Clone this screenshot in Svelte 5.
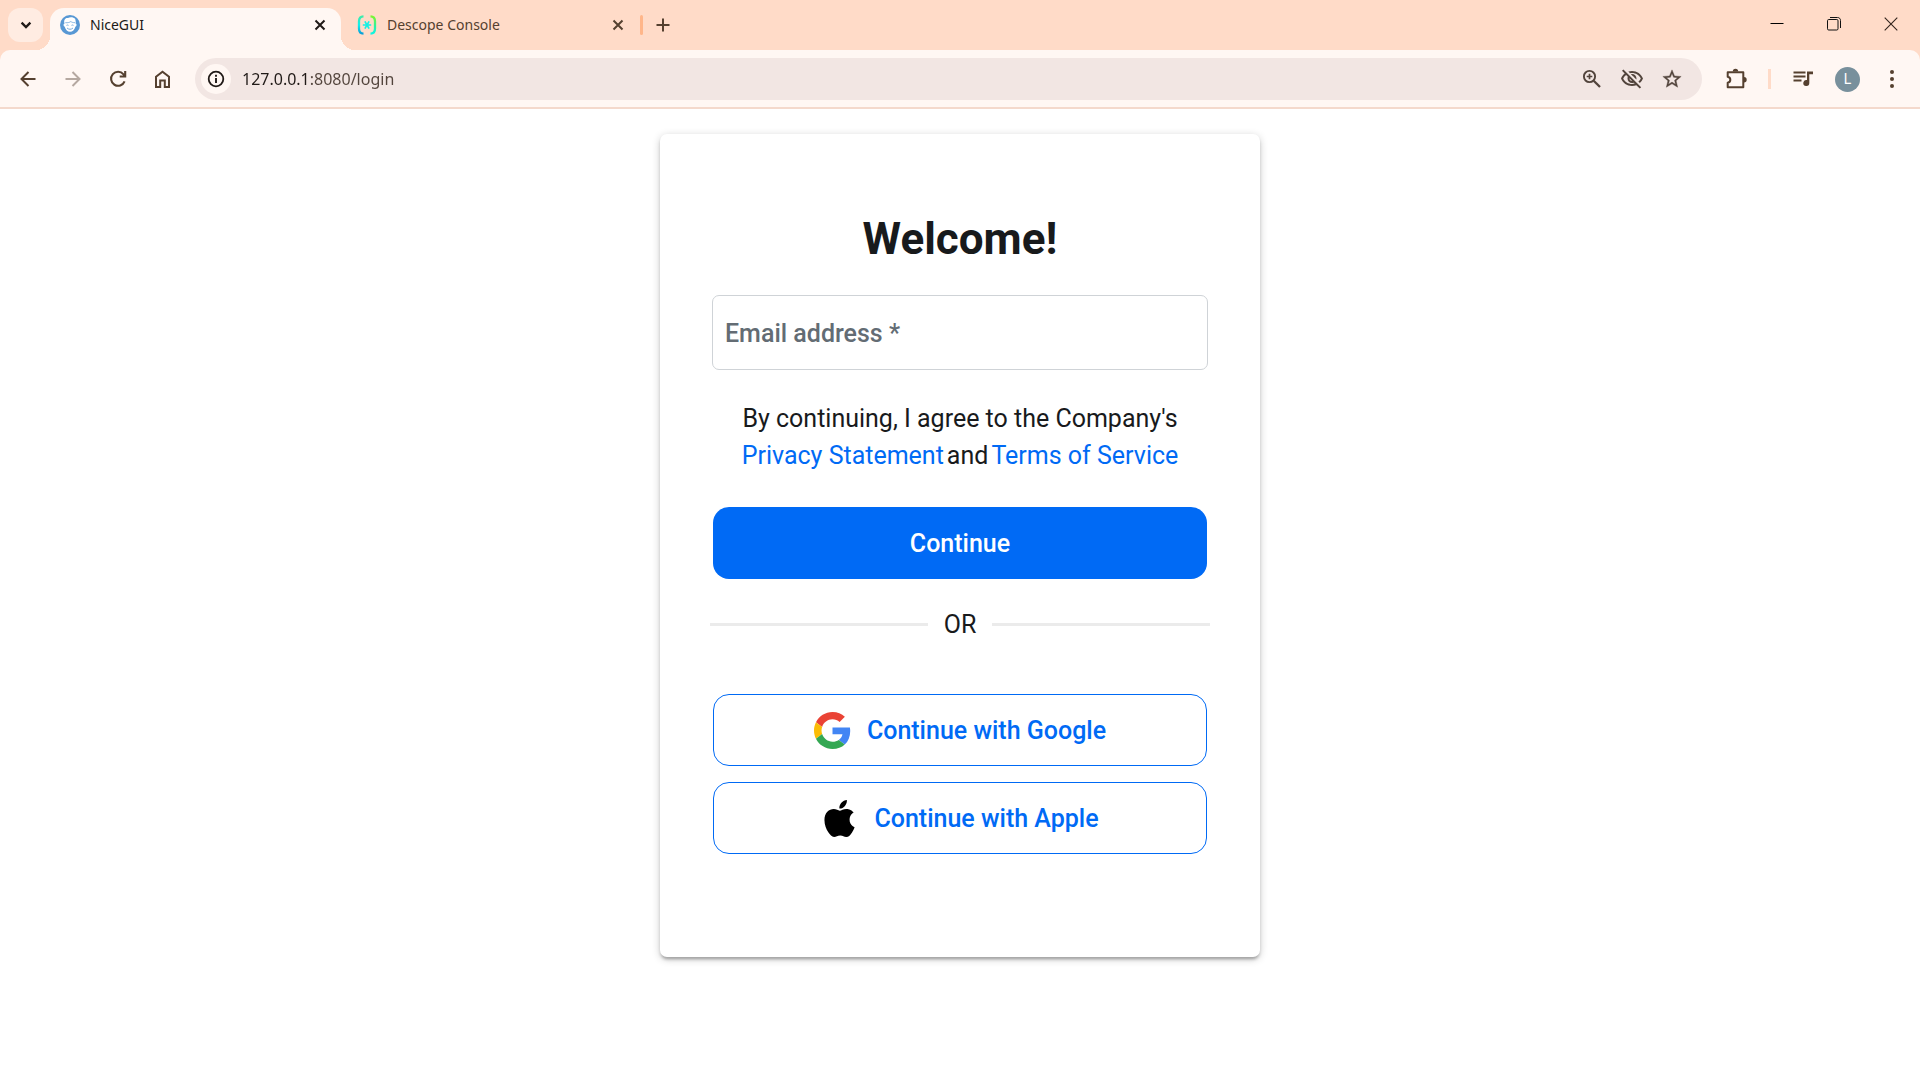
<script>
  let address = $state('127.0.0.1:8080/login');
  let email = $state('');
</script>

<div class="browser">
  <header class="tabstrip">
    <button class="tab-search" aria-label="Search tabs">
      <svg width="16" height="16" viewBox="0 0 16 16"><path d="M3.600 5.600 8 10l4.400-4.400" fill="none" stroke="currentColor" stroke-width="2.300" /></svg>
    </button>

    <div class="tab active">
      <svg class="favicon" viewBox="0 0 20 20">
        <circle cx="10" cy="10" r="10" fill="#5898d4" />
        <path d="M4.600 8.600C3.300 5.600 5.200 2.600 8 3.100c2.200-1.300 5.800-.8 7.300.9-.2 1 .9 2.100.3 4.600 1.400.2 1.300 2.900-.2 3.200-.8 3-2.900 5-5.300 5s-4.600-2-5.400-5c-1.500-.3-1.600-3-.1-3.200z" fill="#fff" />
        <path d="M5.300 7.700c2.700.2 4.300-.3 5.500-1.200 1 .8 2.300 1.200 4.200 1.200" fill="none" stroke="#5898d4" stroke-width=".7" />
        <path d="M6.500 10.400c.5-.5 1.500-.5 2 0m3 0c.5-.5 1.500-.5 2 0M7 13c1.800 1.700 4.200 1.700 6 0" fill="none" stroke="#5898d4" stroke-width=".8" />
      </svg>
      <span class="title">NiceGUI</span>
      <button class="tab-close" aria-label="Close NiceGUI">
        <svg width="20" height="20" viewBox="0 0 20 20"><path d="m5.500 5.500 9 9m0-9-9 9" stroke="currentColor" stroke-width="2" /></svg>
      </button>
    </div>

    <div class="tab">
      <svg class="favicon" viewBox="0 0 20 20">
        <defs>
          <linearGradient id="left-bracket" x1="0" y1="0" x2="0" y2="1">
            <stop offset="0" stop-color="#3fecaa" /><stop offset=".5" stop-color="#12f0ee" /><stop offset="1" stop-color="#0a9fd8" />
          </linearGradient>
          <linearGradient id="right-bracket" x1="0" y1="0" x2="0" y2="1">
            <stop offset="0" stop-color="#7af531" /><stop offset=".6" stop-color="#2cf2a4" /><stop offset="1" stop-color="#0df4e4" />
          </linearGradient>
        </defs>
        <path d="M6.500 1.400C3.300 1.500 2 3.100 2 6.300v7.400c0 3.200 1.300 4.800 4.500 4.900" fill="none" stroke="url(#left-bracket)" stroke-width="2.300" />
        <path d="M13.500 1.400c3.200.1 4.500 1.700 4.500 4.900v7.400c0 3.200-1.300 4.800-4.500 4.900" fill="none" stroke="url(#right-bracket)" stroke-width="2.300" />
        <path d="M5.800 10h8.400M7.900 6.300l4.200 7.400m0-7.400-4.200 7.400" stroke="#14f0e4" stroke-width="1.700" />
      </svg>
      <span class="title">Descope Console</span>
      <button class="tab-close" aria-label="Close Descope Console">
        <svg width="20" height="20" viewBox="0 0 20 20"><path d="m5.500 5.500 9 9m0-9-9 9" stroke="currentColor" stroke-width="2" /></svg>
      </button>
    </div>

    <span class="tab-divider"></span>
    <button class="new-tab" aria-label="New tab">
      <svg width="20" height="20" viewBox="0 0 20 20"><path d="M10 3.500v13M3.500 10h13" stroke="currentColor" stroke-width="2" /></svg>
    </button>

    <div class="window-controls">
      <button aria-label="Minimize"><svg width="14" height="14" viewBox="0 0 14 14"><path d="M.5 6.500h13" stroke="#000" /></svg></button>
      <button aria-label="Restore"><svg width="14" height="14" viewBox="0 0 14 14" fill="none" stroke="#111"><rect x=".5" y="2.500" width="10.500" height="10.500" rx="1.200" /><path d="M3 .5h7.500c1.800 0 3 1.200 3 3V11" /></svg></button>
      <button aria-label="Close window"><svg width="14" height="14" viewBox="0 0 14 14"><path d="m.7.7 12.600 12.600m0-12.600L.7 13.300" stroke="#33241d" stroke-width="1.100" /></svg></button>
    </div>
  </header>

  <nav class="toolbar" aria-label="Browser toolbar">
    <div class="navigation">
      <button class="icon" aria-label="Back"><svg width="24" height="24" viewBox="0 0 24 24"><path d="M19.500 12H5.700m6.800-7-7 7 7 7" fill="none" stroke="currentColor" stroke-width="2" /></svg></button>
      <button class="icon muted" aria-label="Forward"><svg width="24" height="24" viewBox="0 0 24 24"><path d="M4.500 12h13.800m-6.800-7 7 7-7 7" fill="none" stroke="currentColor" stroke-width="2" /></svg></button>
      <button class="icon" aria-label="Reload"><svg width="24" height="24" viewBox="0 0 24 24"><path d="M18.600 14.400A7 7 0 1 1 17.500 7.300l1 1.200M19.200 4v5.500h-5.500" fill="none" stroke="currentColor" stroke-width="2.100" /></svg></button>
      <button class="icon" aria-label="Home"><svg width="24" height="24" viewBox="0 0 24 24"><path d="M5 9.700 11.500 4.700l6.500 5V20H13.800v-6.500H9.200V20H5z" fill="none" stroke="currentColor" stroke-width="2" /></svg></button>
    </div>

    <div class="omnibox">
      <button class="site-info" aria-label="View site information">
        <svg width="20" height="20" viewBox="0 0 20 20"><circle cx="10" cy="10" r="7.300" fill="none" stroke="currentColor" stroke-width="1.800" /><path d="M10 9v5M10 5.800v1.900" stroke="currentColor" stroke-width="1.900" /></svg>
      </button>
      <input class="address" type="text" aria-label="Address and search bar" spellcheck="false" bind:value={address} />
      <div class="page-actions">
        <button class="icon" aria-label="Zoom"><svg width="24" height="24" viewBox="0 0 24 24" fill="none" stroke="currentColor"><circle cx="9.500" cy="9.500" r="5.600" stroke-width="1.900" /><path d="m13.700 13.700 6.300 6.300" stroke-width="2.300" /><path d="M9.500 6.700v5.600M6.700 9.500h5.600" stroke-width="1.700" /></svg></button>
        <button class="icon" aria-label="Third-party cookies blocked"><svg width="24" height="24" viewBox="0 0 24 24"><path d="M12 6c3.790 0 7.170 2.130 8.820 5.500-.59 1.220-1.420 2.270-2.410 3.120l1.410 1.410c1.390-1.230 2.490-2.770 3.180-4.530C21.270 7.110 17 4 12 4c-1.270 0-2.490.2-3.640.57l1.650 1.650C10.660 6.090 11.320 6 12 6zm-1.070 1.140L13 9.210c.57.25 1.030.71 1.280 1.280l2.070 2.070c.08-.34.14-.7.14-1.070C16.500 9.010 14.480 7 12 7c-.37 0-.72.05-1.070.14zM2.010 3.870l2.680 2.680C3.060 7.830 1.770 9.530 1 11.500 2.730 15.890 7 19 12 19c1.520 0 2.980-.29 4.320-.82l3.420 3.420 1.410-1.410L3.420 2.450 2.010 3.870zm7.500 7.500 2.610 2.610c-.04.01-.08.020-.12.020-1.380 0-2.500-1.120-2.500-2.500 0-.05.010-.08.010-.13zm-3.400-3.400 1.750 1.750c-.23.55-.36 1.150-.36 1.780 0 2.480 2.020 4.500 4.500 4.500.63 0 1.230-.13 1.770-.36l.98.98c-.88.24-1.800.38-2.750.38-3.790 0-7.170-2.130-8.820-5.500.7-1.430 1.720-2.610 2.930-3.530z" fill="currentColor" /></svg></button>
        <button class="icon" aria-label="Bookmark this tab"><svg width="22" height="22" viewBox="0 0 24 24"><path d="m22 9.240-7.190-.62L12 2 9.190 8.630 2 9.240l5.460 4.730L5.820 21 12 17.270 18.180 21l-1.630-7.030L22 9.240zM12 15.400l-3.760 2.270 1-4.280-3.320-2.880 4.380-.38L12 6.100l1.710 4.040 4.380.38-3.320 2.880 1 4.280L12 15.400z" fill="currentColor" stroke="currentColor" stroke-width=".4" /></svg></button>
      </div>
    </div>

    <div class="browser-actions">
      <button class="icon" aria-label="Extensions"><svg width="24" height="24" viewBox="0 0 24 24"><path d="M3.700 5.200H19.300V20.200H3.700V15.700C7.200 15 7.200 10.400 3.700 9.700z" fill="none" stroke="currentColor" stroke-width="2" stroke-linejoin="round" /><path d="M8.800 4.500a2.700 2.700 0 0 1 5.400 0zM20 10a2.700 2.700 0 0 1 0 5.400z" fill="currentColor" /></svg></button>
      <span class="toolbar-divider"></span>
      <button class="icon" aria-label="Media controls"><svg width="24" height="24" viewBox="0 0 24 24"><path d="M2.500 5.500h12M2.500 9.500h12M2.500 13.500h8" stroke="currentColor" stroke-width="2" /><path d="M16 4.500h6v2.800h-3.700V16a3 3 0 1 1-2.300-2.900z" fill="currentColor" /></svg></button>
      <button class="avatar" aria-label="Profile">L</button>
      <button class="icon" aria-label="Browser menu"><svg width="24" height="24" viewBox="0 0 24 24" fill="currentColor"><circle cx="12" cy="5" r="2" /><circle cx="12" cy="12" r="2" /><circle cx="12" cy="19" r="2" /></svg></button>
    </div>
  </nav>
</div>

<main>
  <form class="card" onsubmit={(event) => event.preventDefault()}>
    <h1>Welcome!</h1>
    <input class="email" type="email" aria-label="Email address" placeholder="Email address *" bind:value={email} />
    <p class="terms">
      <span>By continuing, I agree to the Company's</span>
      <span class="links"><a href="#privacy">Privacy Statement</a><span>and</span><a href="#terms">Terms of Service</a></span>
    </p>
    <button class="action primary" type="submit">Continue</button>
    <div class="separator"><span>OR</span></div>
    <div class="providers">
      <button class="action outlined" type="button">
        <svg width="37" height="37" viewBox="0 0 48 48">
          <path fill="#EA4335" d="M24 9.500c3.540 0 6.710 1.220 9.210 3.600l6.850-6.850C35.900 2.380 30.470 0 24 0 14.620 0 6.510 5.380 2.560 13.220l7.980 6.190C12.430 13.720 17.740 9.500 24 9.500z" />
          <path fill="#4285F4" d="M46.980 24.550c0-1.570-.15-3.090-.38-4.550H24v9.020h12.940c-.58 2.960-2.260 5.480-4.780 7.180l7.730 6c4.510-4.180 7.090-10.360 7.090-17.650z" />
          <path fill="#FBBC05" d="M10.530 28.590c-.48-1.450-.76-2.990-.76-4.590s.27-3.140.76-4.590l-7.980-6.190C.92 16.460 0 20.120 0 24c0 3.880.92 7.540 2.560 10.780l7.970-6.190z" />
          <path fill="#34A853" d="M24 48c6.480 0 11.930-2.130 15.890-5.810l-7.730-6c-2.150 1.450-4.920 2.300-8.160 2.300-6.260 0-11.570-4.220-13.470-9.910l-7.980 6.190C6.510 42.620 14.620 48 24 48z" />
        </svg>
        <span>Continue with Google</span>
      </button>
      <button class="action outlined" type="button">
        <svg width="37" height="37" viewBox="0 0 814 1000">
          <path fill="#000" d="M788.100 340.900c-5.800 4.500-108.200 62.200-108.200 190.500 0 148.400 130.300 200.900 134.200 202.200-.6 3.200-20.700 71.900-68.700 141.900-42.800 61.600-87.500 123.100-155.500 123.100s-85.500-39.500-164-39.500c-76.500 0-103.700 40.800-165.900 40.800s-105.600-57-155.500-127C46.700 790.700 0 663 0 541.800c0-194.400 126.400-297.500 250.800-297.500 66.100 0 121.200 43.400 162.700 43.400 39.500 0 101.100-46 176.300-46 28.500 0 130.900 2.600 198.300 99.200zm-234-181.500c31.100-36.900 53.100-88.100 53.100-139.300 0-7.100-.6-14.300-1.900-20.100-50.600 1.900-110.800 33.700-147.100 75.800-28.500 32.400-55.100 83.600-55.100 135.500 0 7.800 1.300 15.600 1.900 18.100 3.200.6 8.400 1.300 13.600 1.300 45.400 0 102.500-30.400 135.500-71.300z" />
        </svg>
        <span>Continue with Apple</span>
      </button>
    </div>
  </form>
</main>

<style>
  :global(body) {
    margin: 0;
    background: #fff;
    color: #181a1c;
    font-family: Roboto, "Liberation Sans", sans-serif;
  }
  :global(*) { box-sizing: border-box; }
  button {
    display: flex;
    align-items: center;
    justify-content: center;
    padding: 0;
    border: 0;
    background: none;
    color: inherit;
    font: inherit;
    cursor: pointer;
  }
  svg { display: block; flex: none; }

  .browser {
    background: #ffdbc8;
    color: #55402f;
    font-family: "Noto Sans", "Open Sans", sans-serif;
  }
  .tabstrip {
    display: flex;
    height: 50px;
    padding-left: 8px;
  }
  .tab-search {
    width: 35px;
    height: 34px;
    margin: 8px 7px 0 0;
    border-radius: 12px;
    background: #ffece2;
    color: #201a17;
  }
  .tab {
    position: relative;
    display: flex;
    flex: 0 1 298px;
    align-items: center;
    gap: 10px;
    margin-top: 8px;
    padding: 0 11px 8px 16px;
    font-size: 14px;
    line-height: 24px;
  }
  .tab.active {
    flex-basis: 291px;
    padding-left: 10px;
    border-radius: 14px 14px 0 0;
    background: #fff7f3;
    color: #201a17;
  }
  .tab.active::before,
  .tab.active::after {
    content: "";
    position: absolute;
    bottom: 0;
    width: 14px;
    height: 14px;
  }
  .tab.active::before {
    right: 100%;
    background: radial-gradient(circle at 0 0, transparent 14px, #fff7f3 14px);
  }
  .tab.active::after {
    left: 100%;
    background: radial-gradient(circle at 100% 0, transparent 14px, #fff7f3 14px);
  }
  .favicon { width: 20px; height: 20px; }
  .title { flex: 1; white-space: nowrap; }
  .tab-close { width: 20px; height: 20px; }
  .tab-divider {
    width: 3px;
    height: 20px;
    margin: 15px 10px 0 1px;
    border-radius: 2px;
    background: #ffb68a;
  }
  .new-tab { width: 20px; height: 50px; }
  .window-controls {
    display: flex;
    margin-left: auto;
    padding-right: 1px;
  }
  .window-controls button { width: 57px; height: 48px; }

  .toolbar {
    display: flex;
    align-items: center;
    padding: 8px 12px 7px;
    border-bottom: 2px solid #f4d9cc;
    border-radius: 10px 10px 0 0;
    background: #fff7f3;
  }
  .navigation { display: flex; gap: 13px; }
  .icon { width: 32px; height: 32px; }
  .muted { color: #b5a8a0; }
  .omnibox {
    display: flex;
    flex: 1;
    align-items: center;
    gap: 11px;
    height: 42px;
    margin: 0 18px 0 16px;
    padding: 0 14px 0 6px;
    border-radius: 21px;
    background: #f2e6e3;
  }
  .site-info {
    width: 30px;
    height: 30px;
    border-radius: 50%;
    background: #fff7f3;
    color: #201a17;
  }
  .address {
    flex: 1;
    min-width: 0;
    padding: 0;
    border: 0;
    outline: 0;
    background: linear-gradient(90deg, #201a17 67px, #52443c 67px);
    background-clip: text;
    color: transparent;
    font-family: "Noto Sans", "Open Sans", sans-serif;
    font-size: 16px;
    line-height: 26px;
  }
  .page-actions { display: flex; gap: 8px; color: #52443c; }
  .browser-actions { display: flex; align-items: center; gap: 16px; }
  .toolbar-divider {
    width: 3px;
    height: 20px;
    background: #ffdbc8;
  }
  .avatar {
    width: 25px;
    height: 25px;
    border-radius: 50%;
    background: #78909c;
    color: #fff;
    font-family: Roboto, sans-serif;
    font-size: 14px;
  }

  main {
    display: flex;
    justify-content: center;
    padding: 25px;
  }
  .card {
    display: flex;
    flex-direction: column;
    width: 100%;
    max-width: 600px;
    padding: 78px 50px 103px;
    border-radius: 7px;
    background: #fff;
    box-shadow: 0 2px 8px rgb(0 0 0 / 20%), 0 3px 3px rgb(0 0 0 / 14%), 0 4px 2px -2px rgb(0 0 0 / 12%);
    font-size: 25px;
    line-height: 37px;
  }
  h1 {
    margin: 0 0 29px;
    font-size: 44px;
    line-height: 54px;
    text-align: center;
  }
  .email {
    height: 75px;
    margin: 0 2px 30px;
    padding: 2px 12px 0;
    border: 1px solid #cfd3d7;
    border-radius: 7px;
    outline: 0;
    background: #fff;
    color: inherit;
    font: 500 25px/37px Roboto, sans-serif;
  }
  .email::placeholder { color: #636c74; opacity: 1; }
  .terms {
    display: flex;
    flex-direction: column;
    align-items: center;
    margin: 0 0 33px;
  }
  .links { display: flex; gap: 3px; }
  a { color: #006af5; text-decoration: none; }
  .action {
    gap: 16px;
    height: 72px;
    margin: 0 3px;
    border-radius: 16px;
    font-weight: 500;
  }
  .primary { background: #006af5; color: #fff; }
  .outlined { border: 1px solid #006af5; color: #006af5; }
  .separator {
    display: flex;
    align-items: center;
    gap: 16px;
    margin: 27px 0 51px;
  }
  .separator::before,
  .separator::after {
    content: "";
    flex: 1;
    height: 3px;
    background: #ebebeb;
  }
  .providers {
    display: flex;
    flex-direction: column;
    gap: 16px;
  }
</style>
